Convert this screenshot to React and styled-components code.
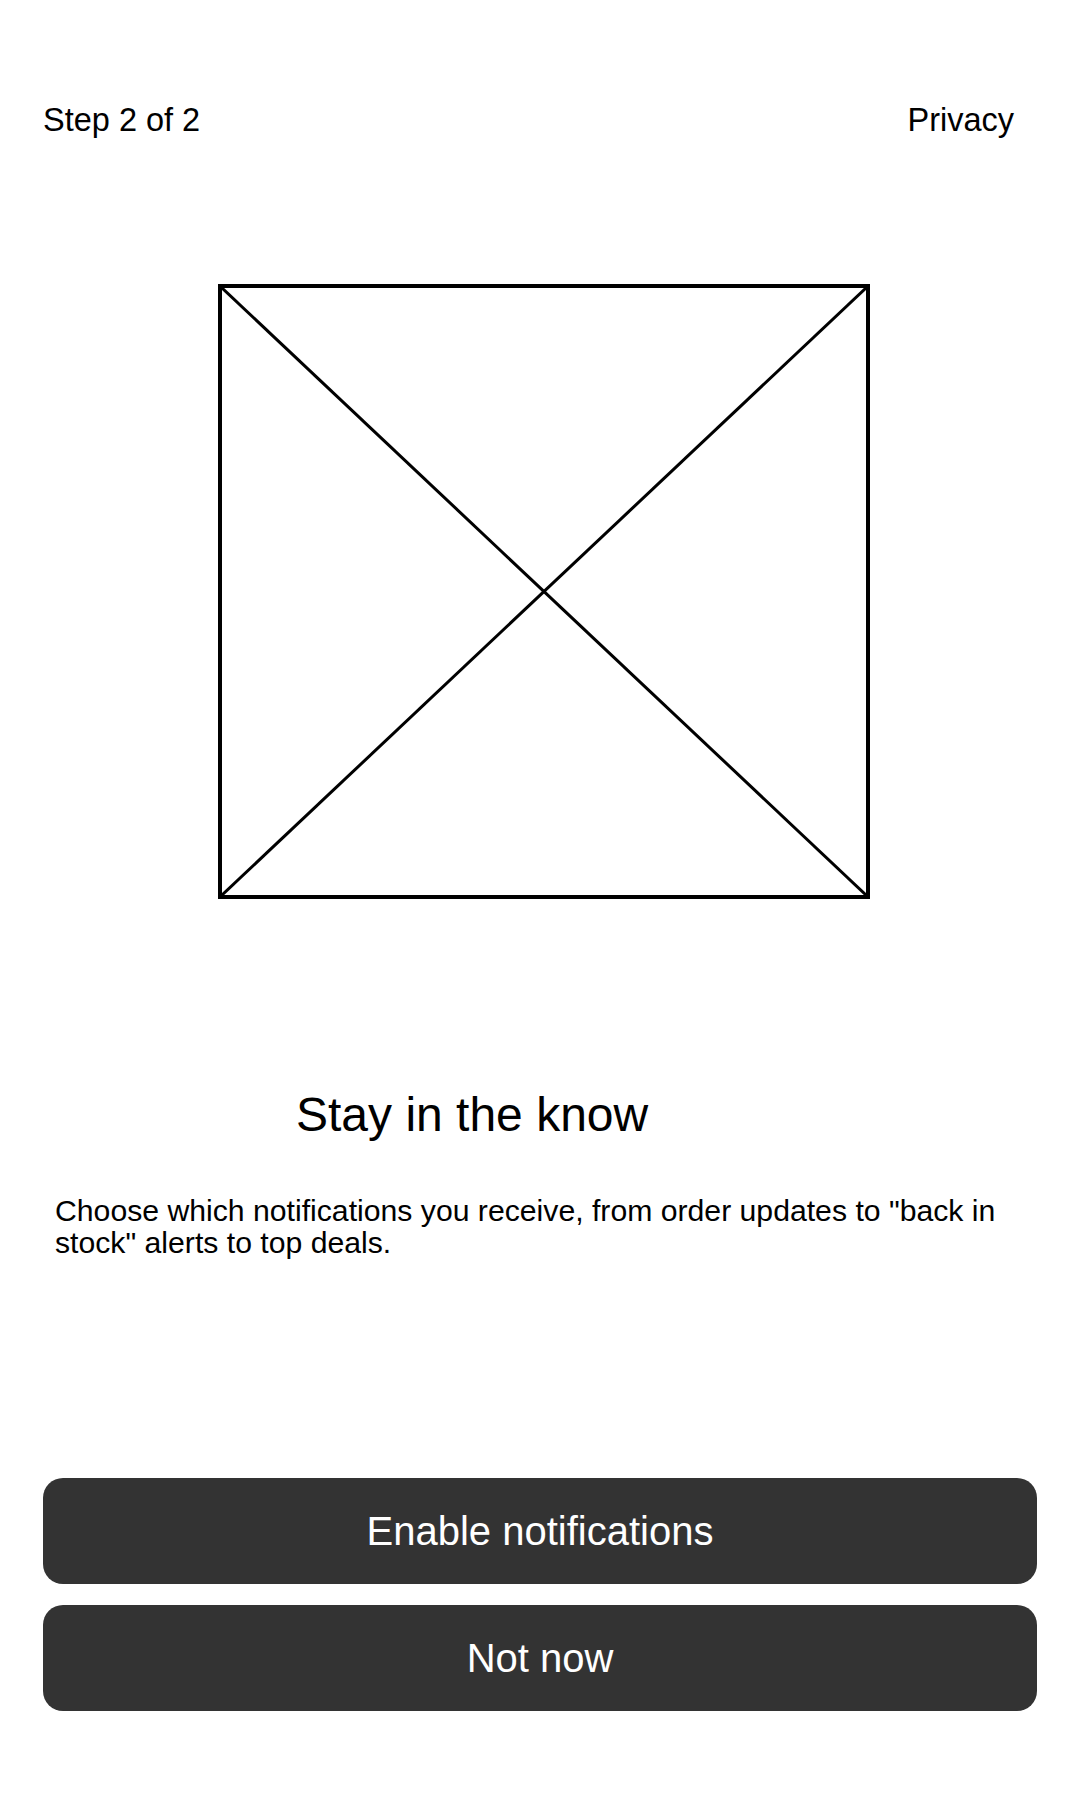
import React from "react";
import styled, { createGlobalStyle } from "styled-components";

const GlobalStyle = createGlobalStyle`
  html, body {
    margin: 0;
    padding: 0;
    background: #ffffff;
  }
  body {
    font-family: "Liberation Sans", Arial, sans-serif;
    color: #000000;
  }
`;

const Screen = styled.div`
  width: 1080px;
  min-height: 1800px;
  box-sizing: border-box;
  padding: 102px 43px 89px 43px;
  display: flex;
  flex-direction: column;
  background: #ffffff;
`;

const TopBar = styled.header`
  display: flex;
  justify-content: space-between;
  align-items: flex-start;
  padding-right: 23px;
`;

const TopText = styled.span`
  font-size: 32.5px;
  line-height: 37px;
  color: #000;
`;

const IllustrationRow = styled.div`
  display: flex;
  margin-top: 145px;
  padding-left: 175px;
`;

const Placeholder = styled.div`
  width: 652px;
  height: 615px;
  box-sizing: border-box;
  border: 4px solid #000;
  svg {
    display: block;
    width: 100%;
    height: 100%;
  }
`;

const Title = styled.h1`
  margin: 188px 0 0 253px;
  font-size: 48px;
  line-height: 56px;
  font-weight: 400;
  color: #000;
`;

const Body = styled.p`
  margin: 52px 0 0 0;
  padding: 0 30px 0 12px;
  font-size: 30.2px;
  line-height: 32px;
  color: #000;
`;

const Actions = styled.div`
  margin-top: auto;
  display: flex;
  flex-direction: column;
  gap: 21px;
`;

const ActionButton = styled.button`
  width: 100%;
  height: 106px;
  border: none;
  border-radius: 20px;
  background: #333333;
  color: #ffffff;
  font-family: "Liberation Sans", Arial, sans-serif;
  font-size: 40px;
  line-height: 46px;
  cursor: pointer;
`;

export default function App() {
  return (
    <>
      <GlobalStyle />
      <Screen>
        <TopBar>
          <TopText>Step 2 of 2</TopText>
          <TopText>Privacy</TopText>
        </TopBar>
        <IllustrationRow>
          <Placeholder>
            <svg viewBox="0 0 644 607" preserveAspectRatio="none">
              <line x1="0" y1="0" x2="644" y2="607" stroke="#000" strokeWidth="3" />
              <line x1="644" y1="0" x2="0" y2="607" stroke="#000" strokeWidth="3" />
            </svg>
          </Placeholder>
        </IllustrationRow>
        <Title>Stay in the know</Title>
        <Body>
          Choose which notifications you receive, from order updates to "back in stock" alerts to top deals.
        </Body>
        <Actions>
          <ActionButton>Enable notifications</ActionButton>
          <ActionButton>Not now</ActionButton>
        </Actions>
      </Screen>
    </>
  );
}
